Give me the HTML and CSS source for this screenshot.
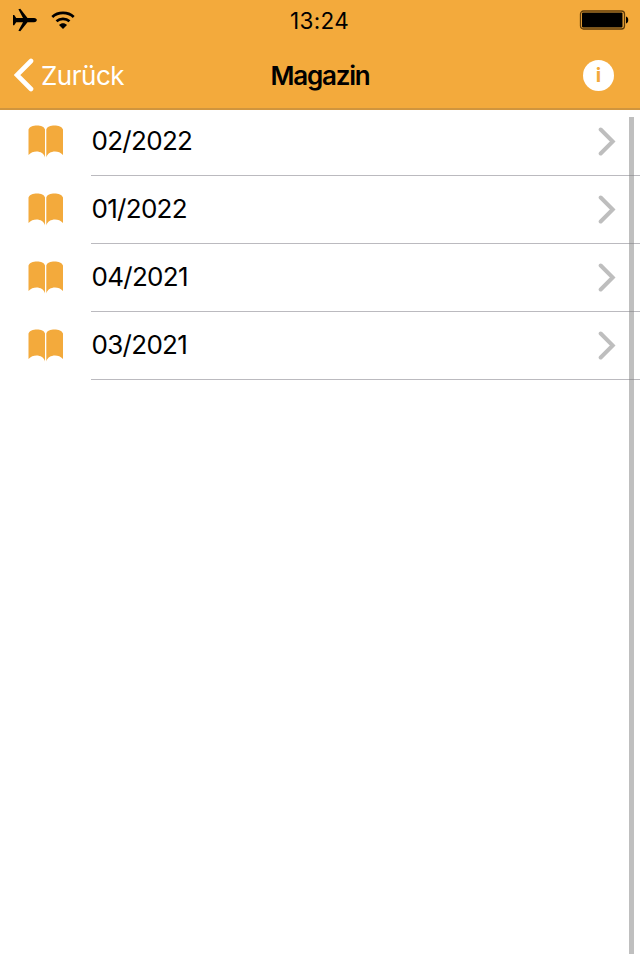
FILE: index.html
```html
<!DOCTYPE html>
<html lang="de">
<head>
  <meta charset="UTF-8" />
  <meta name="viewport" content="width=device-width, initial-scale=1.0"/>
  <title>Magazin</title>
  <link rel="stylesheet" href="styles.css">
</head>
<body>

  <header>
    <div class="status-bar">
      <div class="signals">
        <svg class="plane" width="26" height="24" viewBox="0 0 26 24">
          <path d="M1 7h1.2l2 3H11L6.400 1.200l1.900-.4L15.500 10h6.500c3.800 0 3.800 4.200 0 4.200h-6.500L8.300 23.200l-1.900-.4L11 14.200H4.200l-2 3H1z"/>
        </svg>
        <svg class="wifi" width="24" height="18" viewBox="0 0 24 18">
          <path d="M1.300 6C7 .6 17 .6 22.700 6M5.500 10.200c3.600-3.200 9.400-3.200 13 0" fill="none" stroke="#000" stroke-width="2.700"/>
          <path d="M8 14c2.300-2.200 5.700-2.200 8 0l-4 4z"/>
        </svg>
      </div>
      <span class="time">13:24</span>
      <svg class="battery" width="50" height="20" viewBox="0 0 50 20">
        <rect x="1.500" y="1" width="44" height="18" rx="3" fill="none" stroke="#5f3c0b" stroke-width="1.3"/>
        <rect x="3" y="2.500" width="40.500" height="15" rx="1"/>
        <path d="M47 6.500c3 .5 3 6.500 0 7z"/>
      </svg>
    </div>

    <nav>
      <a class="back">
        <svg width="20" height="34" viewBox="0 0 20 34">
          <path d="M17 3L3 17l14 14" fill="none" stroke="#fff" stroke-width="4.6" stroke-linecap="round"/>
        </svg>
        <span>Zurück</span>
      </a>
      <h1>Magazin</h1>
      <span class="info">i</span>
    </nav>
  </header>

  <!-- shared icons for the rows -->
  <svg class="symbols">
    <symbol id="book" viewBox="0 0 36 33">
      <path d="M.5 4.500C2-1 16-1 17 4.500v28c-1.500-6.700-11.500-8-16.500-2.500z"/>
      <path d="M18.300 4.500C19.300-1 33.500-1 35 4.500V30c-5-5.500-15-4.200-16.700 2.500z"/>
    </symbol>
    <symbol id="chevron" viewBox="0 0 18 30">
      <path d="M2.700 3.500l12 12-12 12" fill="none" stroke="#bebebe" stroke-width="4" stroke-linecap="round"/>
    </symbol>
  </svg>

  <ul class="issues">
    <li>
      <svg class="book"><use href="#book"/></svg>
      <div class="row"><span>02/2022</span><svg class="chevron"><use href="#chevron"/></svg></div>
    </li>
    <li>
      <svg class="book"><use href="#book"/></svg>
      <div class="row"><span>01/2022</span><svg class="chevron"><use href="#chevron"/></svg></div>
    </li>
    <li>
      <svg class="book"><use href="#book"/></svg>
      <div class="row"><span>04/2021</span><svg class="chevron"><use href="#chevron"/></svg></div>
    </li>
    <li>
      <svg class="book"><use href="#book"/></svg>
      <div class="row"><span>03/2021</span><svg class="chevron"><use href="#chevron"/></svg></div>
    </li>
  </ul>

  <div class="scrollbar"></div>

</body>
</html>
```
FILE: styles.css
```css
* {
  box-sizing: border-box;
}

body {
  margin: 0;
  height: 960px;
  overflow: hidden;
  position: relative;
  background: #fff;
  color: #000;
  font-family: Inter, "Liberation Sans", sans-serif;
}

svg {
  display: block;
}

header {
  height: 110px;
  background: #f3aa3c;
  border-bottom: 2px solid #d0953e;
}

.status-bar {
  display: grid;
  grid-template-columns: 1fr auto 1fr;
  align-items: center;
  height: 40px;
  padding: 0 11px 0 12px;
}

.signals {
  display: flex;
  align-items: center;
  gap: 13px;
}

.time {
  font-size: 22.5px;
  letter-spacing: 0.3px;
  padding: 1px 2px 0 0;
}

.battery {
  justify-self: end;
}

nav {
  display: grid;
  grid-template-columns: 1fr auto 1fr;
  align-items: center;
  height: 68px;
  padding: 3px 26px 0 14px;
}

.back {
  display: flex;
  align-items: center;
  gap: 7px;
  color: #fff;
  font-size: 26px;
  letter-spacing: -0.5px;
}

.back svg {
  margin-top: -2px;
}

h1 {
  margin: 0 0 0 12px;
  font-size: 26px;
  font-weight: 600;
  letter-spacing: -1.2px;
}

.info {
  justify-self: end;
  width: 31px;
  height: 31px;
  border-radius: 50%;
  background: #fff;
  color: #f3aa3c;
  font-size: 20px;
  font-weight: 700;
  line-height: 31px;
  text-align: center;
}

.symbols {
  display: none;
}

.issues {
  list-style: none;
  margin: -2px 0 0;
  padding: 0;
}

.issues li {
  display: flex;
  align-items: center;
  height: 68px;
  padding-left: 28px;
}

.book {
  width: 36px;
  height: 33px;
  margin: -2px 27px 0 0;
  fill: #f3aa3c;
}

.row {
  flex: 1;
  display: flex;
  align-items: center;
  justify-content: space-between;
  height: 68px;
  padding: 0 24px 2px 0.5px;
  border-bottom: 1px solid #bbbabf;
  font-size: 26px;
  letter-spacing: -0.7px;
}

.chevron {
  width: 18px;
  height: 30px;
}

.scrollbar {
  position: absolute;
  top: 117px;
  left: 629px;
  width: 5px;
  height: 837px;
  background: rgba(128, 128, 128, 0.5);
}
```
